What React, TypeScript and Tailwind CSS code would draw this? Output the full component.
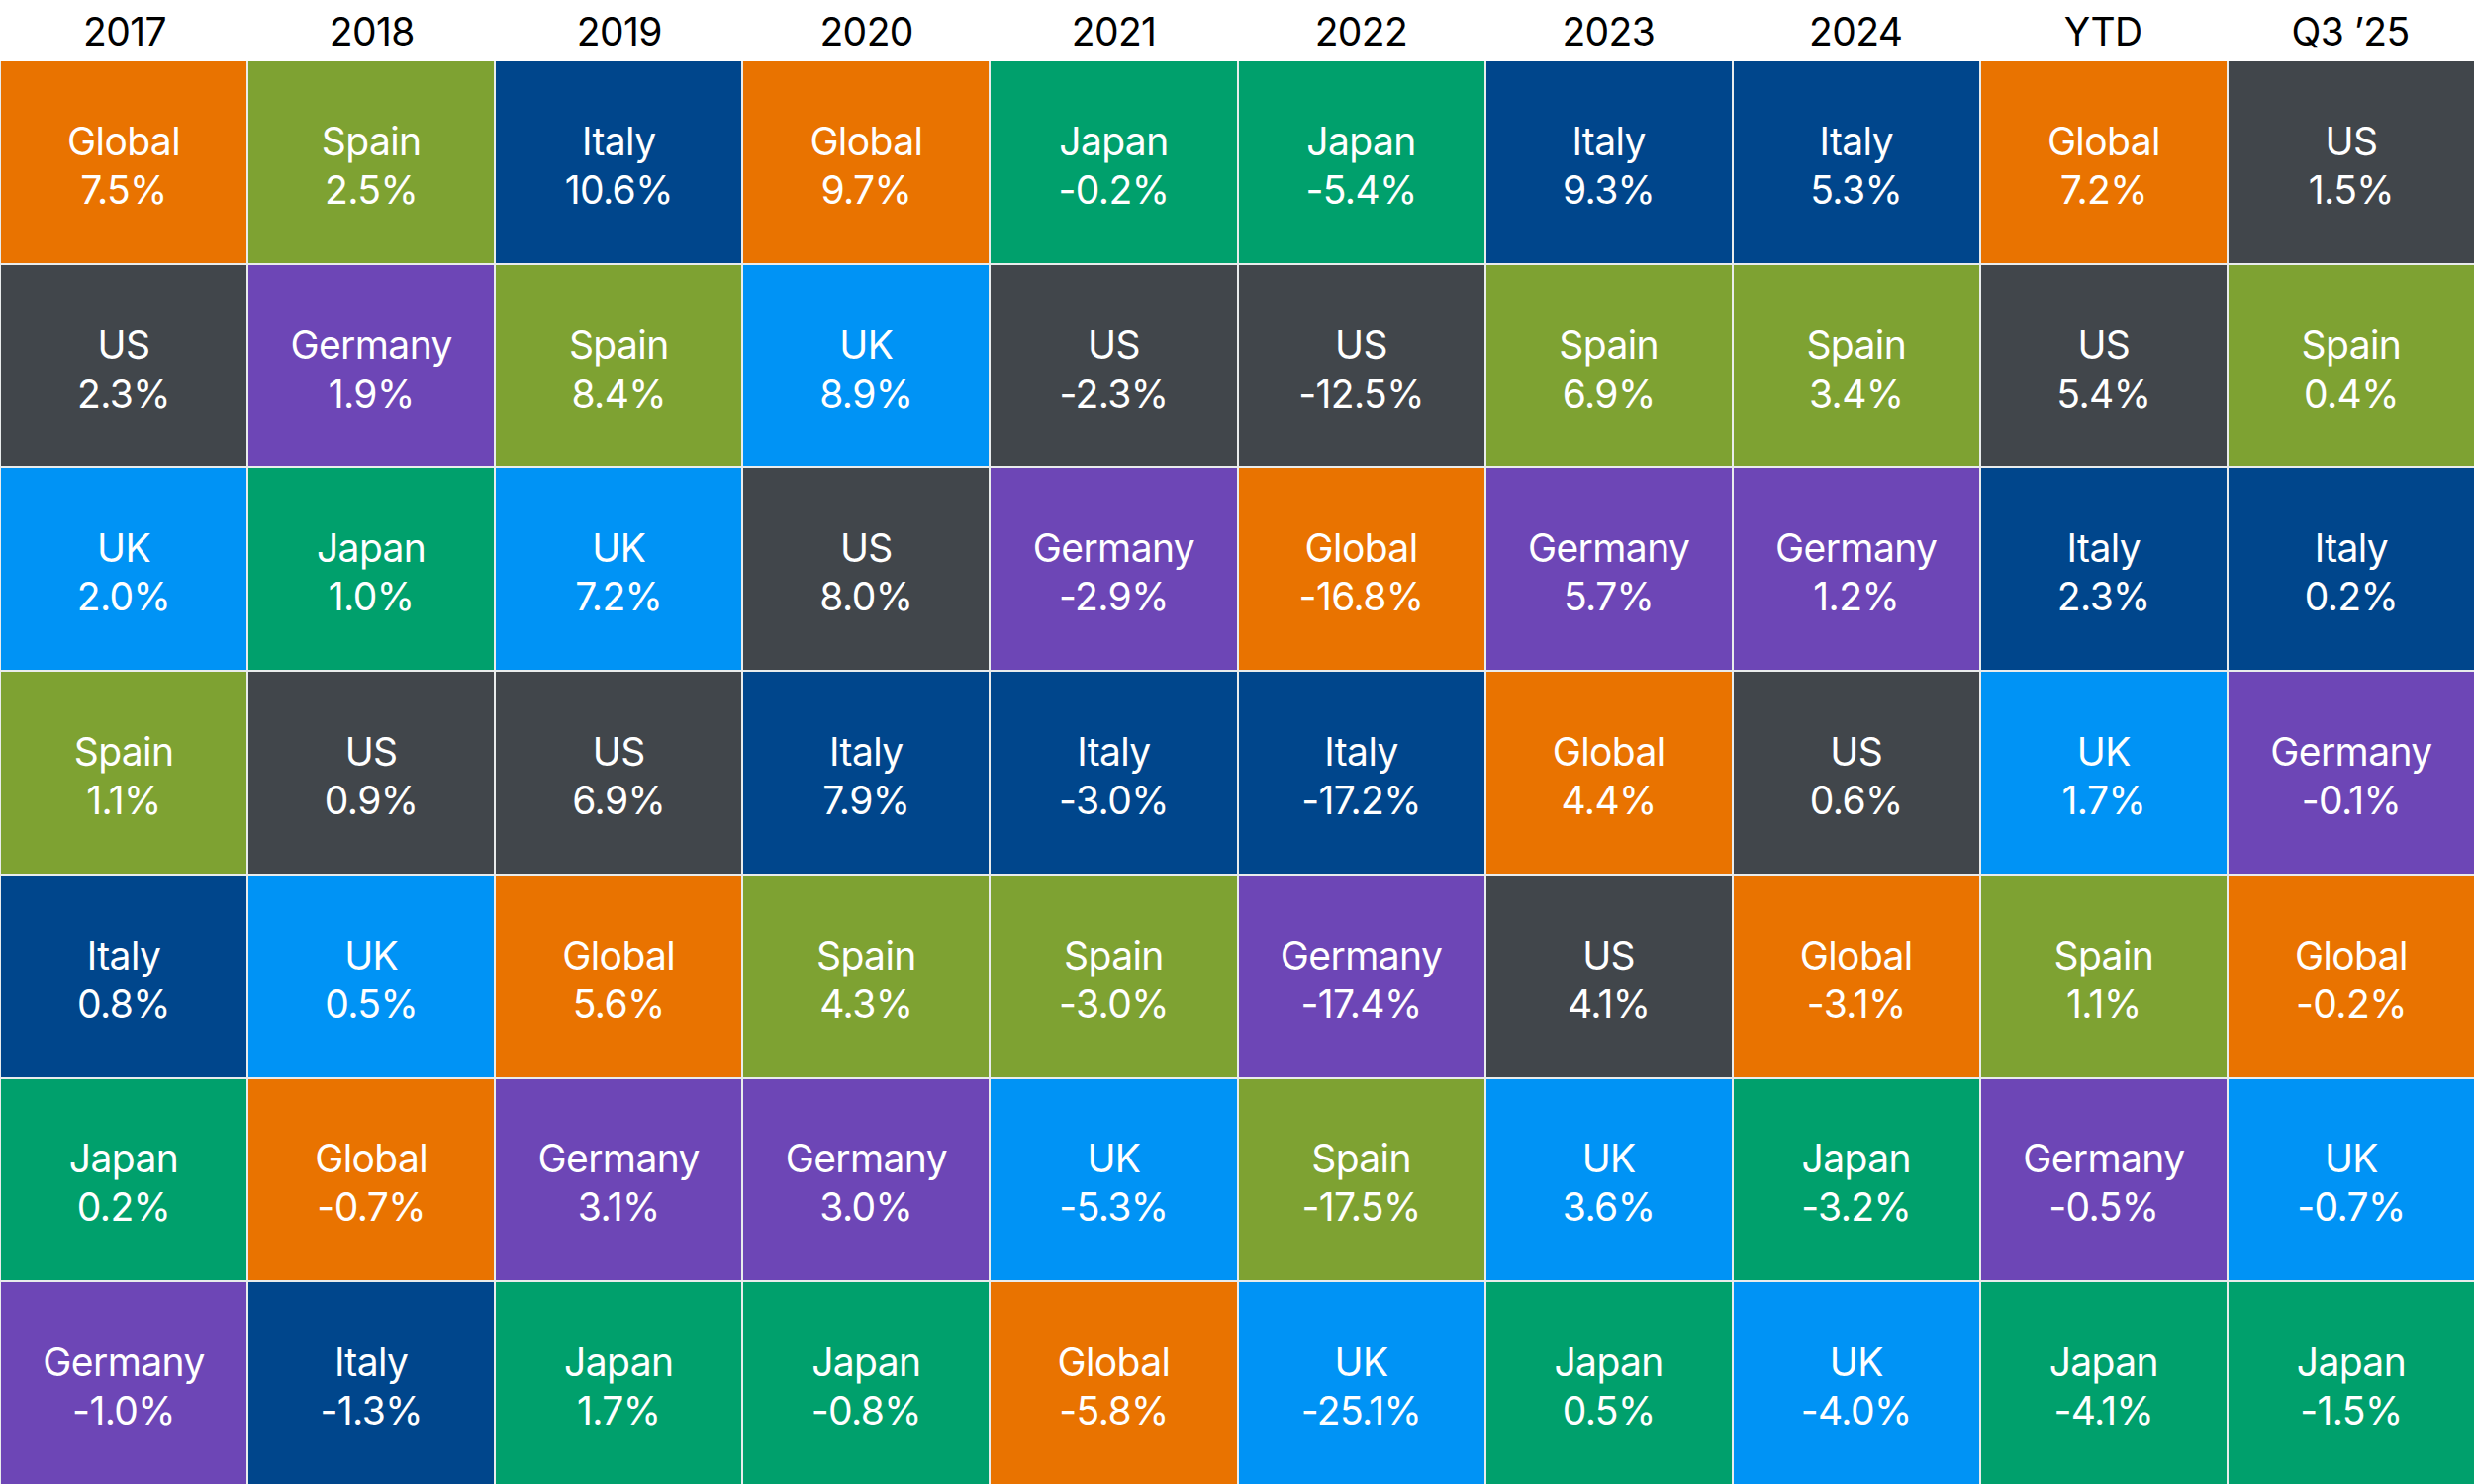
import React from "react";

const colors: Record<string, string> = {
  Global: "bg-[#e97300]",
  Spain: "bg-[#7ea232]",
  Italy: "bg-[#00468c]",
  US: "bg-[#41464b]",
  Germany: "bg-[#6d46b6]",
  UK: "bg-[#0093f5]",
  Japan: "bg-[#00a06c]",
};

const columns: { label: string; cells: [string, string][] }[] = [
  { label: "2017", cells: [["Global", "7.5%"], ["US", "2.3%"], ["UK", "2.0%"], ["Spain", "1.1%"], ["Italy", "0.8%"], ["Japan", "0.2%"], ["Germany", "-1.0%"]] },
  { label: "2018", cells: [["Spain", "2.5%"], ["Germany", "1.9%"], ["Japan", "1.0%"], ["US", "0.9%"], ["UK", "0.5%"], ["Global", "-0.7%"], ["Italy", "-1.3%"]] },
  { label: "2019", cells: [["Italy", "10.6%"], ["Spain", "8.4%"], ["UK", "7.2%"], ["US", "6.9%"], ["Global", "5.6%"], ["Germany", "3.1%"], ["Japan", "1.7%"]] },
  { label: "2020", cells: [["Global", "9.7%"], ["UK", "8.9%"], ["US", "8.0%"], ["Italy", "7.9%"], ["Spain", "4.3%"], ["Germany", "3.0%"], ["Japan", "-0.8%"]] },
  { label: "2021", cells: [["Japan", "-0.2%"], ["US", "-2.3%"], ["Germany", "-2.9%"], ["Italy", "-3.0%"], ["Spain", "-3.0%"], ["UK", "-5.3%"], ["Global", "-5.8%"]] },
  { label: "2022", cells: [["Japan", "-5.4%"], ["US", "-12.5%"], ["Global", "-16.8%"], ["Italy", "-17.2%"], ["Germany", "-17.4%"], ["Spain", "-17.5%"], ["UK", "-25.1%"]] },
  { label: "2023", cells: [["Italy", "9.3%"], ["Spain", "6.9%"], ["Germany", "5.7%"], ["Global", "4.4%"], ["US", "4.1%"], ["UK", "3.6%"], ["Japan", "0.5%"]] },
  { label: "2024", cells: [["Italy", "5.3%"], ["Spain", "3.4%"], ["Germany", "1.2%"], ["US", "0.6%"], ["Global", "-3.1%"], ["Japan", "-3.2%"], ["UK", "-4.0%"]] },
  { label: "YTD", cells: [["Global", "7.2%"], ["US", "5.4%"], ["Italy", "2.3%"], ["UK", "1.7%"], ["Spain", "1.1%"], ["Germany", "-0.5%"], ["Japan", "-4.1%"]] },
  { label: "Q3 \u201925", cells: [["US", "1.5%"], ["Spain", "0.4%"], ["Italy", "0.2%"], ["Germany", "-0.1%"], ["Global", "-0.2%"], ["UK", "-0.7%"], ["Japan", "-1.5%"]] },
];

export default function App() {
  return (
    <div className="flex h-[1500px] w-[2500px] flex-col bg-white font-['Inter','Liberation_Sans',sans-serif]">
      {/* year headers */}
      <div className="grid h-[62px] grid-cols-10 pl-[1px]">
        {columns.map((col) => (
          <div
            key={col.label}
            className="flex items-center justify-center pt-[2px] text-[39px] tracking-[-0.6px] text-black"
          >
            {col.label}
          </div>
        ))}
      </div>

      {/* quilt */}
      <div className="grid flex-1 grid-flow-col grid-cols-10 grid-rows-7 gap-[2px] bg-[#e9ecec] pl-[1px]">
        {columns.map((col) =>
          col.cells.map(([name, value], i) => (
            <div
              key={col.label + i}
              className={`flex flex-col items-center justify-center pt-[6px] text-[39px] leading-[49px] tracking-[-0.6px] text-white ${colors[name]}`}
            >
              <span>{name}</span>
              <span>{value}</span>
            </div>
          ))
        )}
      </div>
    </div>
  );
}
